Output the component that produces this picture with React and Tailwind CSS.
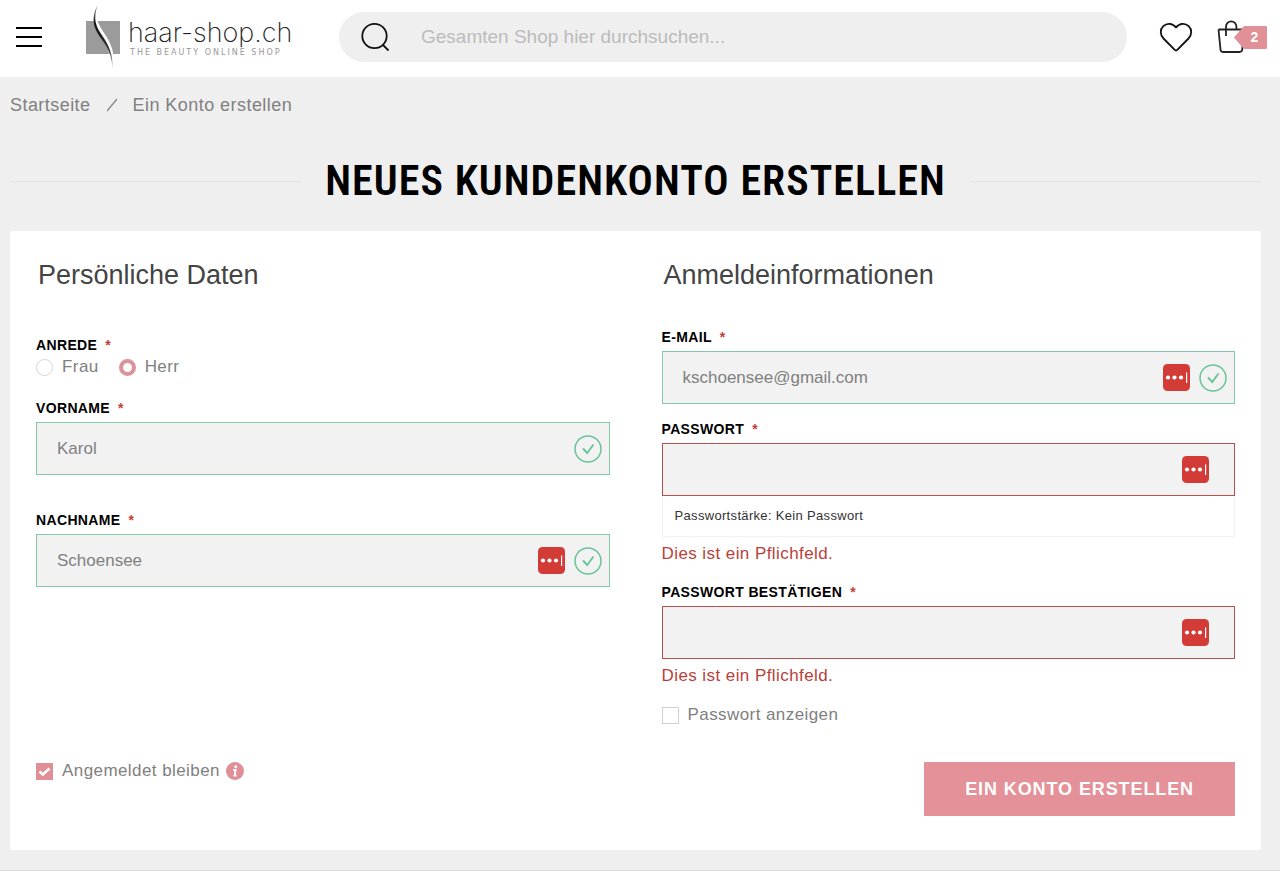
import { useState } from 'react'

function Logo() {
  return (
    <a href="#" aria-label="haar-shop.ch" className="flex items-center">
      <svg width="34" height="64" viewBox="0 0 34 64" aria-hidden="true" className="shrink-0">
        <defs>
          <linearGradient id="strand" x1="0" y1="0" x2="0" y2="1">
            <stop offset="0" stopColor="#888" />
            <stop offset="0.3" stopColor="#111" />
            <stop offset="0.7" stopColor="#333" />
            <stop offset="1" stopColor="#bbb" />
          </linearGradient>
        </defs>
        <rect y="16" width="34" height="33" fill="#9b9b9b" />
        <path d="M11.500 0C5 13 8 22 15 32C22 42 25 51 26.500 64C29 51 27 42 20 31C13 20 8 14 11.500 0Z" fill="#fff" />
        <path d="M11.500 0C5 13 7 22 14 32C21.500 42 26 50 26.500 64C27 50 23.500 41 16.500 31C9.500 21 7 14 11.500 0Z" fill="url(#strand)" />
      </svg>
      <span className="ml-2 flex flex-col whitespace-nowrap">
        <span className="font-[Inter,sans-serif] text-[27px] leading-8 font-extralight text-[#222]">haar-shop.ch</span>
        <span className="ml-0.5 font-['DejaVu_Sans',sans-serif] text-[8px] leading-2 tracking-[2px] text-[#999]">THE BEAUTY ONLINE SHOP</span>
      </span>
    </a>
  )
}

function Header() {
  return (
    <header className="flex h-[77px] items-center bg-white pr-[13px] pb-[3px] pl-4">
      <button type="button" aria-label="Menü" className="flex w-[26px] shrink-0 flex-col gap-[7px]">
        <span className="h-0.5 bg-black" />
        <span className="h-0.5 bg-black" />
        <span className="h-0.5 bg-black" />
      </button>
      <div className="ml-11 w-[206px] shrink-0">
        <Logo />
      </div>
      <form role="search" className="mr-8 ml-[47px] flex h-[50px] flex-1 items-center rounded-full bg-[#efefef] pr-6 pl-5">
        <button type="button" aria-label="Suche" className="mr-[30px] shrink-0">
          <svg width="32" height="32" viewBox="0 0 32 32" fill="none" stroke="#111" strokeWidth="1.800" className="block" aria-hidden="true">
            <circle cx="15.500" cy="15" r="12.200" />
            <path d="M24 24l5.500 5.500" />
          </svg>
        </button>
        <input
          type="text"
          aria-label="Suche"
          placeholder="Gesamten Shop hier durchsuchen..."
          className="min-w-0 flex-1 bg-transparent text-[19px] text-[#555] outline-none placeholder:text-[#bbb]"
        />
      </form>
      <a href="#" aria-label="Wunschliste" className="shrink-0">
        <svg width="34" height="32" viewBox="0 0 34 32" fill="none" stroke="#111" strokeWidth="1.800" strokeLinejoin="round" className="block" aria-hidden="true">
          <path d="M17 29.500Q16.300 29.500 15.500 28.700L4.500 17.500C1 14 .8 8.500 4.300 5.200C7.800 1.900 13.500 2 17 6.500C20.500 2 26.200 1.900 29.700 5.200C33.200 8.500 33 14 29.500 17.500L18.500 28.700Q17.700 29.500 17 29.500Z" />
        </svg>
      </a>
      <a href="#" aria-label="Warenkorb, 2 Artikel" className="ml-6 flex shrink-0 items-center">
        <svg width="17" height="36" viewBox="0 0 17 36" fill="none" stroke="#222" strokeWidth="1.800" className="overflow-visible" aria-hidden="true">
          <path d="M1.500 10.500H26M1.500 10.500l2 20q.2 2.500 2.500 2.500H22.500q2.500 0 2.800-2.500l1-20" />
          <path d="M9 17V7.500a5.200 5.200 0 0 1 10.400 0v3" />
        </svg>
        <span className="relative flex h-[23px] w-[33px] items-center justify-center pl-2 text-sm font-bold text-white">
          <svg viewBox="0 0 33 23" className="absolute inset-0" fill="#e29097" aria-hidden="true">
            <path d="M0 11.500L9 1Q10 0 11 0H32Q33 0 33 1V22Q33 23 32 23H11Q10 23 9 22Z" />
          </svg>
          <span className="relative">2</span>
        </span>
      </a>
    </header>
  )
}

function CheckIcon() {
  return (
    <svg width="28" height="28" viewBox="0 0 28 28" fill="none" stroke="#69c497" strokeWidth="1.500" aria-hidden="true">
      <circle cx="14" cy="14" r="13" />
      <path d="M9 13.500l4.200 4.500L19.500 9.500" strokeWidth="1.900" />
    </svg>
  )
}

// Passwortmanager-Symbol im Eingabefeld
function VaultIcon() {
  return (
    <svg width="27" height="27" viewBox="0 0 27 27" aria-hidden="true">
      <rect width="27" height="27" rx="4.500" fill="#d33b37" />
      <g fill="#fff">
        <circle cx="5" cy="13.500" r="2.100" />
        <circle cx="11.500" cy="13.500" r="2.100" />
        <circle cx="18" cy="13.500" r="2.100" />
        <rect x="23" y="8.500" width="1.200" height="10.500" />
      </g>
    </svg>
  )
}

function Caption({ children }) {
  return (
    <>
      {children}
      <span aria-hidden="true" className="ml-2 text-[#c3403a]">*</span>
    </>
  )
}

const captionClass = 'block h-5 text-sm leading-5 font-bold tracking-wide text-black uppercase'

function Field({ id, label, type = 'text', value, valid, vault, className }) {
  return (
    <div className={className}>
      <label htmlFor={id} className={captionClass}>
        <Caption>{label}</Caption>
      </label>
      <div className="relative mt-1">
        <input
          id={id}
          type={type}
          defaultValue={value}
          required
          className={`block h-[53px] w-full border bg-[#f2f2f2] px-5 text-[17px] text-[#808080] outline-none ${valid ? 'border-[#82c9a8]' : 'border-[#b5504d]'}`}
        />
        <span className={`pointer-events-none absolute inset-y-0 flex items-center gap-[9px] ${valid ? 'right-2' : 'right-[26px]'}`}>
          {vault && <VaultIcon />}
          {valid && <CheckIcon />}
        </span>
      </div>
    </div>
  )
}

function Radio({ value, current, onChange, label }) {
  return (
    <label className="flex items-center gap-[9px]">
      <input
        type="radio"
        name="anrede"
        value={value}
        checked={current === value}
        onChange={() => onChange(value)}
        className="size-[17px] appearance-none rounded-full border border-[#d5d5d5] bg-white checked:border-4 checked:border-[#dd9198]"
      />
      {label}
    </label>
  )
}

function Checkbox({ label, defaultChecked }) {
  return (
    <label className="flex items-center gap-[9px]">
      <span className="relative flex">
        <input
          type="checkbox"
          defaultChecked={defaultChecked}
          className="peer size-[17px] appearance-none border border-[#d0d0d0] bg-white checked:border-[#e08f97] checked:bg-[#e08f97]"
        />
        <svg viewBox="0 0 17 17" fill="none" stroke="#fff" strokeWidth="2.500" className="pointer-events-none absolute inset-0 hidden peer-checked:block" aria-hidden="true">
          <path d="M3.500 8.500l3.300 3L13.500 5.500" />
        </svg>
      </span>
      {label}
    </label>
  )
}

function RequiredError() {
  return <p className="mt-1 h-[26px] text-[17px] leading-[26px] tracking-wide text-[#b93f3b]">Dies ist ein Pflichfeld.</p>
}

export default function App() {
  const [anrede, setAnrede] = useState('herr')

  return (
    <div className="min-h-screen bg-[#efefef] font-['Liberation_Sans',Arial,sans-serif]">
      <Header />
      <main className="pr-[19px] pl-2.5">
        <nav aria-label="Breadcrumb" className="flex h-14 items-center gap-4 text-lg tracking-wide text-[#808080]">
          <a href="#">Startseite</a>
          <svg width="10" height="14" viewBox="0 0 10 14" stroke="#808080" strokeWidth="1.300" aria-hidden="true">
            <path d="M0 13L10 1" />
          </svg>
          <span>Ein Konto erstellen</span>
        </nav>

        <div className="mt-5 flex h-14 items-center gap-6">
          <span className="h-px flex-1 bg-[#e2e2e2]" />
          <h1 className="font-['Roboto_Condensed',Roboto,sans-serif] text-[42px] leading-none font-semibold tracking-wide whitespace-nowrap text-black">
            NEUES KUNDENKONTO ERSTELLEN
          </h1>
          <span className="h-px flex-1 bg-[#e2e2e2]" />
        </div>

        <form className="mt-[22px] rounded-xs bg-white px-[26px] pt-6 pb-[34px]">
          <div className="grid grid-cols-2 gap-[52px]">
            <section>
              <h2 className="ml-0.5 h-10 text-[27px] leading-10 text-[#444]">Persönliche Daten</h2>
              <fieldset className="mt-10">
                <legend className={captionClass}>
                  <Caption>Anrede</Caption>
                </legend>
                <div className="flex h-6 items-center gap-5 text-[17px] tracking-wide text-[#808080]">
                  <Radio value="frau" current={anrede} onChange={setAnrede} label="Frau" />
                  <Radio value="herr" current={anrede} onChange={setAnrede} label="Herr" />
                </div>
              </fieldset>
              <Field id="vorname" label="Vorname" value="Karol" valid className="mt-[19px]" />
              <Field id="nachname" label="Nachname" value="Schoensee" valid vault className="mt-[35px]" />
            </section>

            <section>
              <h2 className="ml-0.5 h-10 text-[27px] leading-10 text-[#444]">Anmeldeinformationen</h2>
              <Field id="email" label="E-Mail" type="email" value="kschoensee@gmail.com" valid vault className="mt-8" />
              <Field id="passwort" label="Passwort" type="password" vault className="mt-[15px]" />
              <p className="h-[41px] border border-t-0 border-[#f2f2f2] px-3 text-[13px] leading-10 tracking-wide text-[#333]">
                Passwortstärke: Kein Passwort
              </p>
              <RequiredError />
              <Field id="passwort2" label="Passwort bestätigen" type="password" vault className="mt-[15px]" />
              <RequiredError />
              <div className="mt-3.5 flex h-6 text-[17px] tracking-wide text-[#808080]">
                <Checkbox label="Passwort anzeigen" />
              </div>
            </section>
          </div>

          <div className="mt-[35px] flex items-start justify-between">
            <div className="flex h-[18px] items-center gap-1.5 text-[17px] tracking-wide text-[#808080]">
              <Checkbox label="Angemeldet bleiben" defaultChecked />
              <button type="button" aria-label="Info">
                <svg width="18" height="18" viewBox="0 0 18 18" className="block" aria-hidden="true">
                  <circle cx="9" cy="9" r="9" fill="#e08f97" />
                  <circle cx="9.800" cy="4.800" r="1.500" fill="#fff" />
                  <path d="M7.200 8H9.700L8.500 13.500H10.500" fill="none" stroke="#fff" strokeWidth="1.800" />
                </svg>
              </button>
            </div>
            <button type="button" className="h-[54px] bg-[#e49199] px-[41px] text-lg font-bold tracking-wider text-white">
              EIN KONTO ERSTELLEN
            </button>
          </div>
        </form>
      </main>
      <footer className="mt-5 border-t border-[#dcdcdc]" />
    </div>
  )
}
